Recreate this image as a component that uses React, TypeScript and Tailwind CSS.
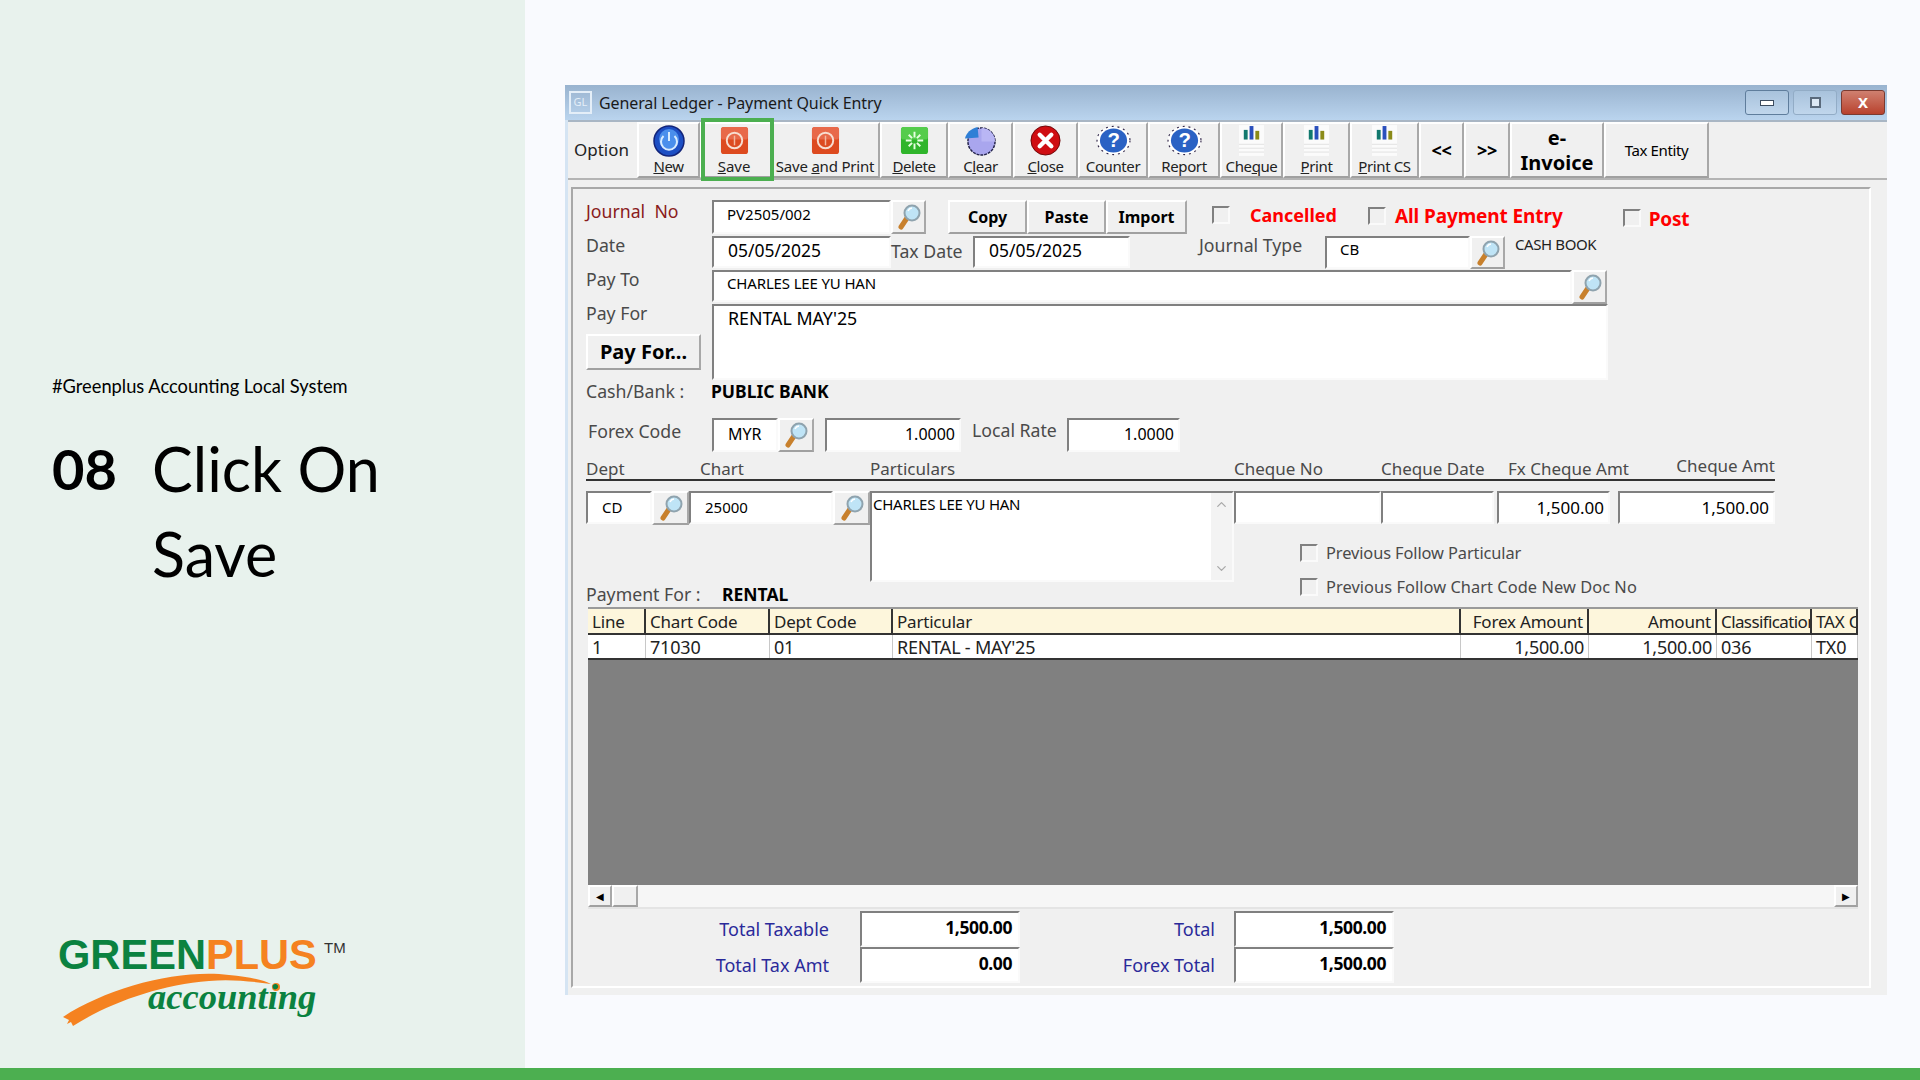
import type { ReactNode } from "react";
import { ChevronDown, ChevronUp } from "lucide-react";

const raised = "border-2 border-t-white border-l-white border-r-[#a8a8a8] border-b-[#a0a0a0] bg-[#f0f0f0]";
const sunken = "border-2 border-t-[#808080] border-l-[#808080] border-r-[#fafafa] border-b-[#fafafa] bg-white";

function SearchIcon() {
  return (
    <svg viewBox="0 0 26 28" className="w-[26px] h-[28px]">
      <path d="M11 15 L5 24" stroke="#c8802c" strokeWidth="5" strokeLinecap="round" />
      <circle cx="16" cy="10" r="7.5" fill="#bfe4f6" stroke="#8fa3ae" strokeWidth="2" />
      <path d="M12 8 a5 5 0 0 1 4 -3" stroke="#fff" strokeWidth="1.5" fill="none" />
    </svg>
  );
}

function SearchBtn({ w = "w-[35px]", h = "h-[34px]" }: { w?: string; h?: string }) {
  return (
    <div className={`${raised} ${w} ${h} shrink-0 flex items-center justify-center`}>
      <SearchIcon />
    </div>
  );
}

function Field({ className, children, right }: { className: string; children?: ReactNode; right?: boolean }) {
  return (
    <div className={`${sunken} ${className} shrink-0 flex items-center text-black ${right ? "justify-end" : ""}`}>
      {children}
    </div>
  );
}

function Check({ className = "" }: { className?: string }) {
  return <div className={`w-[18px] h-[18px] shrink-0 border-2 border-t-[#808080] border-l-[#808080] border-r-[#fafafa] border-b-[#fafafa] bg-[#f0f0f0] ${className}`} />;
}

function PowerIcon() {
  return (
    <svg viewBox="0 0 32 32" className="w-8 h-8">
      <circle cx="16" cy="16" r="15" fill="#1d4fc4" stroke="#12247a" strokeWidth="1.5" />
      <circle cx="16" cy="14" r="10" fill="#4a8fec" />
      <path d="M10.5 11 a8 8 0 1 0 11 0" fill="none" stroke="#d8ecff" strokeWidth="2" />
      <path d="M16 7 V16" stroke="#d8ecff" strokeWidth="2" />
    </svg>
  );
}

function StopIcon() {
  return (
    <svg viewBox="0 0 30 30" className="w-[29px] h-[29px]">
      <rect x="1" y="1" width="28" height="28" rx="3" fill="#dd4a1f" />
      <rect x="1" y="1" width="28" height="13" rx="3" fill="#e8694a" />
      <circle cx="15" cy="15" r="8" fill="none" stroke="#f7ddd0" strokeWidth="2" />
      <path d="M15 10 V20" stroke="#f2b8a0" strokeWidth="1.5" />
    </svg>
  );
}

function DeleteIcon() {
  return (
    <svg viewBox="0 0 30 30" className="w-[29px] h-[29px]">
      <rect x="1" y="1" width="28" height="28" rx="3" fill="#2fb52b" />
      <rect x="1" y="1" width="28" height="13" rx="3" fill="#55cc4c" />
      <path d="M15 6 V12 M15 18 V24 M6 15 H12 M18 15 H24 M9 9 L12.5 12.5 M21 9 L17.5 12.5 M9 21 L12.5 17.5 M21 21 L17.5 17.5" stroke="#e6ffe0" strokeWidth="2" />
    </svg>
  );
}

function ClearIcon() {
  return (
    <svg viewBox="0 0 36 32" className="w-[35px] h-[31px]">
      <circle cx="19" cy="17" r="14" fill="#a9a6ee" stroke="#22224a" strokeWidth="1.5" strokeDasharray="3 1" />
      <path d="M19 17 L19 3 A14 14 0 0 1 33 17 Z" fill="#b9b6f4" />
      <path d="M2 14 C3 8 8 4 15 2 L16 13 Z" fill="#2f7fd6" />
    </svg>
  );
}

function CloseIcon() {
  return (
    <svg viewBox="0 0 32 32" className="w-[31px] h-[31px]">
      <circle cx="16" cy="16" r="15" fill="#cf0d12" stroke="#6d0507" strokeWidth="1" />
      <path d="M10 10 L22 22 M22 10 L10 22" stroke="#fff" strokeWidth="4.5" strokeLinecap="round" />
    </svg>
  );
}

function HelpIcon() {
  return (
    <svg viewBox="0 0 38 32" className="w-[37px] h-[31px]">
      <ellipse cx="19" cy="16" rx="17" ry="14.5" fill="#fff" stroke="#33284a" strokeWidth="1.2" strokeDasharray="2 4" />
      <ellipse cx="19" cy="16" rx="14" ry="12.5" fill="#2a62c4" />
      <text x="19" y="23" textAnchor="middle" fontSize="21" fontWeight="700" fill="#fff" fontFamily="Liberation Sans, sans-serif">?</text>
    </svg>
  );
}

function ChartDocIcon() {
  return (
    <svg viewBox="0 0 28 32" className="w-[27px] h-[31px]">
      <rect x="1" y="0" width="26" height="32" fill="#fbfbfb" />
      <path d="M1 20 H27 M1 24 H27 M1 28 H27" stroke="#e2e2e2" />
      <rect x="6" y="5" width="4" height="10" fill="#12796e" />
      <rect x="12" y="1" width="4" height="14" fill="#2a4fbc" />
      <rect x="18" y="6" width="4" height="9" fill="#8a8a18" />
    </svg>
  );
}

const toolbar: { w: string; icon: ReactNode; label: ReactNode; extra?: string }[] = [
  { w: "w-[63px]", icon: <PowerIcon />, label: <><u>N</u>ew</> },
  { w: "w-[72px]", icon: <StopIcon />, label: <><u>S</u>ave</>, extra: "pr-[4px] tracking-normal" },
  { w: "w-[108px]", icon: <StopIcon />, label: <>Save <u>a</u>nd Print</>, extra: "pr-[2px] tracking-[-0.2px]" },
  { w: "w-[68px]", icon: <DeleteIcon />, label: <><u>D</u>elete</> },
  { w: "w-[65px]", icon: <ClearIcon />, label: <>C<u>l</u>ear</> },
  { w: "w-[65px]", icon: <CloseIcon />, label: <><u>C</u>lose</> },
  { w: "w-[70px]", icon: <HelpIcon />, label: "Counter" },
  { w: "w-[72px]", icon: <HelpIcon />, label: "Report" },
  { w: "w-[63px]", icon: <ChartDocIcon />, label: <>Che<u>q</u>ue</> },
  { w: "w-[67px]", icon: <ChartDocIcon />, label: <><u>P</u>rint</> },
  { w: "w-[69px]", icon: <ChartDocIcon />, label: <><u>P</u>rint CS</> },
];

function Toolbar() {
  return (
    <div className="h-[60px] bg-[#f0f0f0] border-t-2 border-b-2 border-t-[#a9b6c4] border-b-[#b4b4b4] flex text-[15px] text-[#222] tracking-[-0.4px]">
      <div className="w-[69px] flex items-center pl-[6px] text-[17px] tracking-normal">Option</div>
      {toolbar.map((b, i) => (
        <div key={i} className={`${raised} ${b.w} ${b.extra ?? ""} shrink-0 flex flex-col items-center justify-between pb-[1px] h-[56px]`}>
          <div className="h-[37px] flex items-center">{b.icon}</div>
          <span className="leading-[18px] whitespace-nowrap">{b.label}</span>
        </div>
      ))}
      <div className={`${raised} w-[45px] h-[56px] flex items-center justify-center font-bold text-[18px] text-black`}>&lt;&lt;</div>
      <div className={`${raised} w-[46px] h-[56px] flex items-center justify-center font-bold text-[18px] text-black`}>&gt;&gt;</div>
      <div className={`${raised} w-[94px] h-[56px] flex flex-col items-center justify-center font-bold text-[20px] leading-[25px] text-black tracking-normal`}>
        <span>e-</span>
        <span>Invoice</span>
      </div>
      <div className={`${raised} w-[105px] h-[56px] flex items-center justify-center text-[15px] text-black`}>Tax Entity</div>
    </div>
  );
}

const tableColumns = "grid grid-cols-[58px_124px_123px_568px_128px_128px_95px_46px]";

function HeadCell({ children, right }: { children: ReactNode; right?: boolean }) {
  return (
    <div className={`h-[26px] bg-[#fdf6dc] border-r-2 border-b-2 border-[#333] px-[4px] flex items-center whitespace-nowrap overflow-hidden ${right ? "justify-end" : ""}`}>
      {children}
    </div>
  );
}

function BodyCell({ children, right }: { children: ReactNode; right?: boolean }) {
  return (
    <div className={`h-[23px] bg-white border-r border-[#c8c8c8] px-[4px] flex items-center text-[18px] ${right ? "justify-end" : ""}`}>
      {children}
    </div>
  );
}

function Grid() {
  return (
    <div className="ml-[2px] w-[1270px] h-[302px] flex flex-col border-t-2 border-[#9a9a9a] text-[17px] text-[#222] tracking-[-0.2px]">
      <div className={tableColumns}>
        <HeadCell>Line</HeadCell>
        <HeadCell>Chart Code</HeadCell>
        <HeadCell>Dept Code</HeadCell>
        <HeadCell>Particular</HeadCell>
        <HeadCell right>Forex Amount</HeadCell>
        <HeadCell right>Amount</HeadCell>
        <HeadCell><span className="tracking-[-0.6px]">Classification</span></HeadCell>
        <HeadCell>TAX Code</HeadCell>
      </div>
      <div className={`${tableColumns} border-b-2 border-[#333]`}>
        <BodyCell>1</BodyCell>
        <BodyCell>71030</BodyCell>
        <BodyCell>01</BodyCell>
        <BodyCell>RENTAL - MAY&apos;25</BodyCell>
        <BodyCell right>1,500.00</BodyCell>
        <BodyCell right>1,500.00</BodyCell>
        <BodyCell>036</BodyCell>
        <BodyCell>TX0</BodyCell>
      </div>
      <div className="flex-1 bg-[#808080]" />
      <div className="h-[24px] flex bg-[#f6f6f6] border-b-2 border-[#e4e4e4]">
        <div className={`${raised} w-[24px] flex items-center justify-center text-[10px] text-black`}>◀</div>
        <div className={`${raised} w-[26px]`} />
        <div className="flex-1" />
        <div className={`${raised} w-[24px] flex items-center justify-center text-[10px] text-black`}>▶</div>
      </div>
    </div>
  );
}

function Totals() {
  const value = "h-[36px] w-[160px] font-bold text-[17.5px] pr-[6px] pb-[2px] tracking-[-0.4px] border-b-[#808080] border-r-[#808080]";
  const label = "text-right text-[#2a2a9a] text-[18px]";
  return (
    <div className="mt-[2px] ml-[2px] flex flex-col">
      <div className="flex items-center h-[36px]">
        <div className={`w-[241px] ${label}`}>Total Taxable</div>
        <div className="ml-[31px]"><Field className={value} right>1,500.00</Field></div>
        <div className={`w-[195px] ${label}`}>Total</div>
        <div className="ml-[19px]"><Field className={value} right>1,500.00</Field></div>
      </div>
      <div className="flex items-center h-[36px]">
        <div className={`w-[241px] ${label}`}>Total Tax Amt</div>
        <div className="ml-[31px]"><Field className={value} right>0.00</Field></div>
        <div className={`w-[195px] ${label}`}>Forex Total</div>
        <div className="ml-[19px]"><Field className={value} right>1,500.00</Field></div>
      </div>
    </div>
  );
}

function Form() {
  return (
    <div className="mt-[7px] ml-[3px] w-[1300px] h-[801px] border-2 border-t-[#a8a8a8] border-l-[#a8a8a8] border-r-white border-b-white pl-[13px] pt-[11px] text-[#4a4a4a] text-[17.7px] leading-none">
      <div className="flex h-[34px]">
        <div className="w-[126px] pt-[3px] text-[#8a1c1c]">Journal&nbsp; No</div>
        <Field className="w-[179px] h-[34px] pl-[13px] pb-[5px] text-[15px]">PV2505/002</Field>
        <SearchBtn />
        <div className="ml-[22px] flex text-[16px] font-bold text-black h-[34px]">
          <div className={`${raised} w-[79px] flex items-center justify-center pb-[1px]`}>Copy</div>
          <div className={`${raised} w-[79px] flex items-center justify-center pb-[1px]`}>Paste</div>
          <div className={`${raised} w-[81px] flex items-center justify-center pb-[1px]`}>Import</div>
        </div>
        <Check className="ml-[25px] mt-[6px]" />
        <span className="ml-[20px] mt-[6px] font-bold text-[18px] text-[#ff0000]">Cancelled</span>
        <Check className="ml-[31px] mt-[7px]" />
        <span className="ml-[9px] mt-[7px] font-bold text-[19px] text-[#ff0000] tracking-[-0.1px]">All Payment Entry</span>
        <Check className="ml-[60px] mt-[9px]" />
        <span className="ml-[8px] mt-[10px] font-bold text-[19px] text-[#ff0000] tracking-[-0.2px]">Post</span>
      </div>

      <div className="flex h-[33px] mt-[2px]">
        <div className="w-[126px] pt-[1px]">Date</div>
        <Field className="w-[179px] h-[32px] pl-[14px] pb-[2px] text-[17.5px]">05/05/2025</Field>
        <div className="w-[82px] pt-[7px] pl-[-1px] whitespace-nowrap">Tax Date</div>
        <Field className="w-[157px] h-[32px] pl-[14px] pb-[2px] text-[17.5px]">05/05/2025</Field>
        <div className="ml-[69px] w-[126px] pt-[1px] whitespace-nowrap">Journal Type</div>
        <Field className="w-[145px] h-[33px] pl-[13px] pb-[6px] text-[15px]">CB</Field>
        <SearchBtn h="h-[33px]" />
        <span className="ml-[10px] mt-[1px] text-[15px] text-[#222] tracking-[-0.4px]">CASH BOOK</span>
      </div>

      <div className="flex h-[33px] mt-[1px]">
        <div className="w-[126px] pt-[1px]">Pay To</div>
        <Field className="w-[860px] h-[32px] pl-[13px] pb-[6px] text-[15px] tracking-[-0.15px]">CHARLES LEE YU HAN</Field>
        <SearchBtn h="h-[34px]" />
      </div>

      <div className="flex h-[76px] mt-[1px]">
        <div className="w-[126px] flex flex-col">
          <span className="pt-[1px]">Pay For</span>
          <div className={`${raised} mt-[11px] w-[115px] h-[36px] flex items-center justify-center font-bold text-[20px] text-black`}>Pay For...</div>
        </div>
        <Field className="w-[896px] h-[76px] pl-[14px] pt-[4px] text-[17.8px] !items-start">RENTAL MAY&apos;25</Field>
      </div>

      <div className="flex h-[24px] items-center">
        <div className="w-[125px]">Cash/Bank :</div>
        <span className="font-bold text-[17.5px] text-black">PUBLIC BANK</span>
      </div>

      <div className="flex h-[34px] mt-[14px]">
        <div className="w-[126px] pl-[2px] pt-[5px]">Forex Code</div>
        <Field className="w-[66px] h-[34px] pl-[14px] pb-[3px] text-[16px]">MYR</Field>
        <SearchBtn w="w-[36px]" />
        <Field className="ml-[11px] w-[136px] h-[34px] pr-[4px] pb-[3px] text-[16px]" right>1.0000</Field>
        <div className="w-[106px] pl-[11px] pt-[4px] whitespace-nowrap">Local Rate</div>
        <Field className="w-[113px] h-[34px] pr-[4px] pb-[3px] text-[16px]" right>1.0000</Field>
      </div>

      <div className="flex items-end h-[29px] w-[1189px] border-b-2 border-[#333] whitespace-nowrap pb-[2px] text-[17px]">
        <div className="w-[114px]">Dept</div>
        <div className="w-[170px]">Chart</div>
        <div className="w-[364px]">Particulars</div>
        <div className="w-[147px]">Cheque No</div>
        <div className="w-[127px]">Cheque Date</div>
        <div className="w-[167px]">Fx Cheque Amt</div>
        <div className="flex-1 text-right pb-[3px]">Cheque Amt</div>
      </div>

      <div className="flex mt-[10px]">
        <div className="w-[648px] flex flex-col">
          <div className="flex h-[91px] items-start">
            <Field className="w-[66px] h-[33px] pl-[14px] text-[15px]">CD</Field>
            <SearchBtn w="w-[37px]" h="h-[34px]" />
            <Field className="w-[144px] h-[33px] pl-[14px] text-[15px]">25000</Field>
            <SearchBtn w="w-[37px]" h="h-[34px]" />
            <div className={`${sunken} w-[364px] h-[91px] flex text-[15px] text-black tracking-[-0.25px]`}>
              <div className="flex-1 pl-[1px] pt-[4px]">CHARLES LEE YU HAN</div>
              <div className="w-[21px] bg-[#f3f3f3] flex flex-col justify-between items-center py-[4px] text-[#a8a8a8]">
                <ChevronUp size={15} />
                <ChevronDown size={15} />
              </div>
            </div>
          </div>
          <div className="flex h-[25px] items-center">
            <span className="w-[136px]">Payment For :</span>
            <span className="font-bold text-[17.5px] text-black">RENTAL</span>
          </div>
        </div>
        <div className="flex flex-col text-[17px]">
          <div className="flex h-[33px]">
            <Field className="w-[147px] h-[33px]" />
            <Field className="w-[113px] h-[33px]" />
            <Field className="ml-[3px] w-[113px] h-[33px] pr-[4px]" right>1,500.00</Field>
            <Field className="ml-[8px] w-[157px] h-[33px] pr-[4px]" right>1,500.00</Field>
          </div>
          <div className="ml-[66px] mt-[20px] flex items-center gap-[8px] text-[16.4px] tracking-[-0.1px]">
            <Check />
            <span>Previous Follow Particular</span>
          </div>
          <div className="ml-[66px] mt-[16px] flex items-center gap-[8px] text-[16.4px] tracking-[0.05px]">
            <Check />
            <span>Previous Follow Chart Code New Doc No</span>
          </div>
        </div>
      </div>

      <Grid />
      <Totals />
    </div>
  );
}

function Logo() {
  return (
    <svg viewBox="0 0 300 110" className="w-[300px] h-[110px]">
      <text x="-1" y="38" fontFamily="Liberation Sans, sans-serif" fontWeight="700" fontSize="41.6" fill="#0b8240">
        GREEN<tspan fill="#f58220">PLUS</tspan>
      </text>
      <text x="265" y="22" fontFamily="Liberation Sans, sans-serif" fontSize="15" fill="#333">TM</text>
      <path d="M4 86 C50 56 120 38 170 44 C190 46 205 49 212 53 C190 50 170 48 150 50 C100 54 50 72 14 95 L12 91 L8 93 L10 89 Z" fill="#f58220" />
      <circle cx="217" cy="56" r="4" fill="#f58220" />
      <text x="89" y="78" fontFamily="Liberation Serif, serif" fontStyle="italic" fontWeight="700" fontSize="36.5" fill="#0b8240">accounting</text>
    </svg>
  );
}

export default function App() {
  return (
    <div className="w-[1920px] h-[1080px] flex flex-col overflow-hidden bg-[#f9fafe] font-['Noto_Sans',sans-serif]">
      <div className="flex flex-1 min-h-0">
        <aside className="w-[525px] shrink-0 bg-[#e8f2ed] flex flex-col pl-[52px] text-black font-['Lato',sans-serif]">
          <p className="mt-[373px] text-[18.3px] leading-[26px]">#Greenplus Accounting Local System</p>
          <div className="mt-[27px] flex">
            <span className="w-[100px] font-bold text-[56px] leading-[85px]">08</span>
            <h1 className="text-[61px] leading-[85px] font-normal w-[280px]">Click On Save</h1>
          </div>
          <div className="mt-auto mb-[27px] ml-[7px]">
            <Logo />
          </div>
        </aside>
        <main className="pl-[40px] pt-[85px]">
          <div className="w-[1322px] h-[910px] bg-[#f0f0f0] flex flex-col">
            <div className="h-[35px] bg-gradient-to-b from-[#99b3cf] to-[#bad4ee] flex items-center pl-[4px] pr-[2px]">
              <div className="w-[23px] h-[23px] border-2 border-[#e4eef8] text-[#e4eef8] text-[11px] flex items-center justify-center">GL</div>
              <span className="ml-[7px] text-[16px] text-[#1a1a1a] tracking-[-0.1px]">General Ledger - Payment Quick Entry</span>
              <div className="ml-auto flex gap-[4px]">
                <div className="w-[44px] h-[25px] rounded-[3px] border border-[#5f7d9c] bg-gradient-to-b from-[#a8c2dc] to-[#c0d6ec] flex items-center justify-center">
                  <div className="w-[14px] h-[6px] border border-[#3c4c60] bg-white" />
                </div>
                <div className="w-[44px] h-[25px] rounded-[3px] border border-[#92acc6] bg-gradient-to-b from-[#a8c2dc] to-[#c0d6ec] flex items-center justify-center">
                  <div className="w-[11px] h-[11px] border-2 border-[#5a6a7c] bg-[#dce8f4]" />
                </div>
                <div className="w-[44px] h-[25px] rounded-[3px] border border-[#7a3a30] bg-gradient-to-b from-[#cf8070] to-[#b8402c] flex items-center justify-center text-white font-bold text-[15px]">X</div>
              </div>
            </div>
            <div className="flex-1 border-l-[3px] border-l-[#d5e4f3]">
              <Toolbar />
              <Form />
            </div>
          </div>
        </main>
      </div>
      <div className="h-[12px] shrink-0 bg-[#4caf50]" />
      <div className="absolute left-[701px] top-[118px] w-[73px] h-[63px] border-4 border-[#4caf50]" />
    </div>
  );
}
